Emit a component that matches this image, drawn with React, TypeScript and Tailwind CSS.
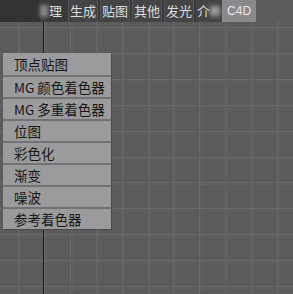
import React from "react";

const topItems = ["生成", "贴图", "其他", "发光"];
const menuItems = ["顶点贴图", "MG 颜色着色器", "MG 多重着色器", "位图", "彩色化", "渐变", "噪波", "参考着色器"];

function Grid() {
  const xs: number[] = [];
  const ys: number[] = [];
  for (let k = 0; k < 12; k++) {
    xs.push(Math.round(18 + 25.9 * k) + 0.5);
    ys.push(Math.round(27 + 25.9 * k) - 22 + 0.5);
  }
  return (
    <svg className="absolute inset-0" width="293" height="272">
      {xs.map((x) => (
        <g key={"x" + x}>
          <line x1={x} y1={0} x2={x} y2={272} stroke="#69696b" strokeWidth={1} />
          <line x1={x + 2} y1={0} x2={x + 2} y2={272} stroke="#616163" strokeWidth={1} />
        </g>
      ))}
      {ys.map((y) => (
        <g key={"y" + y}>
          <line x1={0} y1={y} x2={293} y2={y} stroke="#69696b" strokeWidth={1} />
          <line x1={0} y1={y + 2} x2={293} y2={y + 2} stroke="#616163" strokeWidth={1} />
        </g>
      ))}
      <line x1={43.5} y1={0} x2={43.5} y2={272} stroke="#1c1c1c" strokeWidth={1} />
    </svg>
  );
}

export default function App() {
  return (
    <div
      className="w-[293px] h-[294px] overflow-hidden bg-[#5b5b5d] flex flex-col"
      style={{ fontFamily: '"Noto Sans CJK SC", "Noto Sans", sans-serif' }}
    >
      <div className="h-[22px] flex items-stretch bg-[#3a3a3a] text-[13px] text-[#dcdcdc] leading-[22px] shrink-0">
        <div className="w-[40px] bg-[#333335]" />
        <div className="w-[26px] flex items-center">
          <div className="w-[8px] h-[12px] bg-[#8a8a8a] blur-[2px]" />
          <span className="ml-[1px]">理</span>
        </div>
        {topItems.map((t) => (
          <div key={t} className="ml-[2px] px-[1px] bg-[#444446] border-x border-[#555]">
            {t}
          </div>
        ))}
        <div className="ml-[2px] pl-[1px] w-[26px] bg-[#444446] flex items-center">
          <span>介</span>
          <div className="w-[10px] h-[10px] bg-[#9a9a9a] blur-[2px]" />
        </div>
        <div className="w-[34px] bg-[#8a8a8c] text-[12px] text-[#e6e6e6] flex items-center justify-center" style={{ fontFamily: '"Liberation Sans", sans-serif' }}>
          C4D
        </div>
        <div className="flex-1 bg-[#5b5b5d]" />
      </div>
      <div className="relative flex-1">
        <Grid />
        <div className="absolute left-[3px] top-[31px] w-[108px] bg-[#9b9b9d] shadow-[1px_1px_0_#4a4a4a]">
          {menuItems.map((m, i) => (
            <div
              key={m}
              className={
                "h-[22px] pl-[11px] flex items-center text-[13.5px] text-[#161616] whitespace-nowrap " +
                (i > 0 ? "border-t-2 border-[#727274]" : "")
              }
            >
              {m}
            </div>
          ))}
        </div>
      </div>
    </div>
  );
}
